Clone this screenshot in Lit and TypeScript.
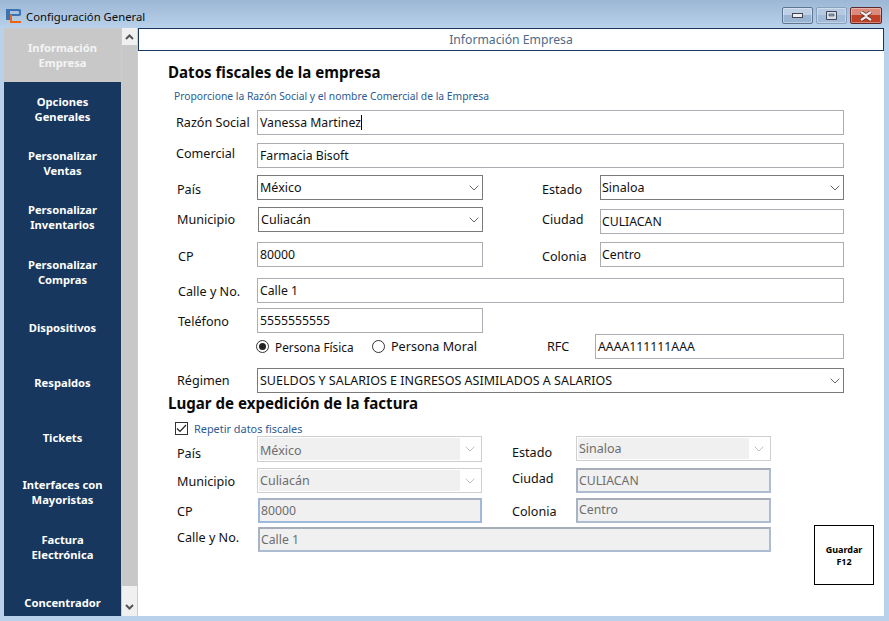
import { LitElement, html, css, svg } from "lit";
import { customElement } from "lit/decorators.js";

const chevron = svg`<svg class="chev" width="10" height="6" viewBox="0 0 10 6"><path d="M.7.7l4.3 4.3L9.300.7" fill="none" stroke="currentColor" stroke-width="1"/></svg>`;

const menu: [string, string, string][] = [
  ["Información", "Empresa", "item active"],
  ["Opciones", "Generales", "item"],
  ["Personalizar", "Ventas", "item"],
  ["Personalizar", "Inventarios", "item"],
  ["Personalizar", "Compras", "item h55"],
  ["Dispositivos", "", "item h56"],
  ["Respaldos", "", "item"],
  ["Tickets", "", "item h56"],
  ["Interfaces con", "Mayoristas", "item"],
  ["Factura", "Electrónica", "item h56"],
  ["Concentrador", "", "item"],
];

@customElement("app-root")
export class AppRoot extends LitElement {
  static styles = css`
    :host { display: block; width: 889px; height: 621px; overflow: hidden; font-family: "Noto Sans", "Open Sans", sans-serif; font-size: 12px; color: #111; }
    * { box-sizing: border-box; }
    .window { width: 889px; height: 621px; display: flex; flex-direction: column; background: #b9d1ea; }
    .title { height: 28px; flex: none; display: flex; align-items: flex-start; background: linear-gradient(#9cb7d5, #b9d1ea); padding: 7px 7px 0 5px; }
    .logo { margin-top: 1px; margin-right: 5px; flex: none; }
    .title-text { flex: 1; font-size: 11.3px; line-height: 18px; color: #0c0c0c; margin-top: 1px; }
    .caps { display: flex; gap: 3px; }
    .cap { width: 31px; height: 17px; border: 1px solid #5f7690; border-radius: 2px; display: flex; align-items: center; justify-content: center; background: linear-gradient(#bdd0e6 0 50%, #9ab5d3 50% 100%); box-shadow: inset 0 0 0 1px rgba(255,255,255,.35); }
    .cap.faded { border-color: #8aa1bc; background: linear-gradient(#b4cae2 0 50%, #a1bbd8 50% 100%); }
    .cap.close { width: 32px; border-color: #5c2a2e; background: linear-gradient(#dc8a7c 0 45%, #bf4128 45% 100%); }
    .body { flex: 1; display: flex; padding: 0 5px 5px 4px; min-height: 0; }
    .side { width: 117px; flex: none; background: #17375e; display: flex; flex-direction: column; overflow: hidden; }
    .item { height: 54px; flex: none; display: flex; flex-direction: column; align-items: center; justify-content: center; color: #fff; font-weight: 700; font-size: 11.2px; line-height: 15px; text-align: center; }
    .item.active { background: #c8c8c8; color: #f4f4f4; }
    .h55 { height: 55px; } .h56 { height: 56px; }
    .scroll { width: 15px; flex: none; margin: 0 1px; background: #c8c8c8; display: flex; flex-direction: column; justify-content: space-between; }
    .sb { background: #f0f0f0; display: flex; align-items: center; justify-content: center; color: #555; }
    .sb.up { height: 17px; } .sb.down { height: 30px; padding-top: 12px; }
    .main { flex: 1; background: #fff; display: flex; flex-direction: column; padding-right: 0; min-width: 0; }
    .bar { height: 23px; flex: none; border: 1px solid #17375e; display: flex; align-items: center; justify-content: center; color: #4d6a8a; font-size: 12.2px; }
    .content { padding: 11px 0 0 30px; display: flex; flex-direction: column; }
    h2 { margin: 0; font-size: 15.1px; line-height: 20px; font-weight: 700; color: #0a0a0a; height: 20px; }
    .sub { margin: 7px 0 7px 6px; font-size: 10.3px; line-height: 14px; height: 14px; color: #2c5a94; }
    .row { display: flex; align-items: flex-start; height: 25px; flex: none; }
    .mt5 { margin-top: 5px; } .mt1 { margin-top: 1px; } .mt7 { margin-top: 7px; } .mt8 { margin-top: 8px; } .mt9 { margin-top: 9px; } .mt10 { margin-top: 10px; } .mt11 { margin-top: 11px; } .mt4 { margin-top: 4px; } .mt2 { margin-top: 2px; }
    .lbl { line-height: 16px; font-size: 12.6px; white-space: nowrap; color: #111; flex: none; }
    .c89 { width: 89px; } .c90 { width: 90px; } .c117 { width: 117px; padding-left: 59px; } .c94 { width: 94px; padding-left: 30px; }
    .pl8 { padding-left: 8px; } .pl9 { padding-left: 9px; } .pl10 { padding-left: 10px; } .pl41 { padding-left: 41px; }
    .pt2 { padding-top: 2px; } .pt3 { padding-top: 3px; } .pt5 { padding-top: 5px; } .pt6 { padding-top: 6px; } .pt7 { padding-top: 7px; } .pt9 { padding-top: 9px; } .pt10 { padding-top: 10px; }
    .f { height: 25px; border: 1px solid #abadb3; background: #fff; padding: 0 2px; line-height: 23px; font-size: 12.25px; color: #111; flex: none; white-space: nowrap; overflow: hidden; position: relative; }
    .tight { padding-left: 1px; }
    .sel { border-color: #7a7a7a; display: flex; justify-content: space-between; align-items: center; padding-right: 2px; font-size: 12.5px; }
    .chev { flex: none; color: #666; margin-right: 1px; }
    .w226 { width: 226px; } .w225 { width: 225px; } .w224 { width: 224px; } .w244 { width: 244px; } .w587 { width: 587px; } .w249 { width: 249px; } .w195 { width: 195px; } .w513 { width: 513px; }
    .caret { display: inline-block; width: 1px; height: 15px; background: #000; vertical-align: -3px; }
    .sel.off { border-color: #cfcfcf; padding: 1px; color: #6d6d6d; }
    .sel.off .val { flex: 1; background: #f0f0f0; height: 21px; line-height: 21px; padding-left: 1px; }
    .sel.off .val.low { height: 22px; line-height: 26px; }
    .sel.off .arr { width: 20px; flex: none; display: flex; justify-content: center; color: #c0c0c0; }
    .sel.off .chev { margin: 0; color: #c0c0c0; }
    .inp-off { background: #f0f0f0; border: 2px solid #adbcd0; border-top-color: #a8aeb8; border-left-color: #a8b3c3; color: #6d6d6d; line-height: 21px; padding: 0 1px; }
    .inp-off.blue { border-color: #9dbadd; border-top-color: #a8b4c6; }
    .inp-off.up { line-height: 19px; }
    .radios { width: 338px; padding-left: 88px; display: flex; align-items: center; height: 25px; flex: none; }
    .radio { width: 13px; height: 13px; border: 1px solid #333; border-radius: 50%; display: flex; align-items: center; justify-content: center; flex: none; margin-right: 6px; }
    .radio i { width: 7px; height: 7px; border-radius: 50%; background: #222; }
    .rlabel { width: 97px; flex: none; line-height: 16px; font-size: 11.8px; }
    .rlabel.last { width: 90px; font-size: 12.6px; }
    .check { display: flex; align-items: center; margin: 8px 0 0 7px; height: 15px; font-size: 10.9px; color: #2c5a94; }
    .box { width: 13px; height: 13px; border: 1px solid #333; display: flex; align-items: center; justify-content: center; margin-right: 6px; }
    .lower { display: flex; }
    .lower-form { width: 646px; flex: none; }
    .save { width: 60px; height: 60px; flex: none; border: 1.5px solid #000; align-self: flex-end; margin-bottom: -33px; padding-top: 2px; display: flex; flex-direction: column; align-items: center; justify-content: center; font-size: 9px; font-weight: 700; line-height: 12.5px; background: #fff; color: #000; }
    .h26 { height: 26px; }
  `;

  render() {
    return html`<div class="window">
      <div class="title">
        <svg class="logo" width="16" height="16" viewBox="0 0 16 16">
          <path d="M1 1h12.500a2.500 2.500 0 0 1 0 7H5v4H1z M5 3v3h7.800a1.500 1.500 0 0 0 0-3z" fill="#3a72b4" fill-rule="evenodd"/>
          <path d="M5 6.500h2v6.500h9v2H5z" fill="#f0650f"/>
        </svg>
        <div class="title-text">Configuración General</div>
        <div class="caps">
          <div class="cap"><svg width="12" height="5" viewBox="0 0 12 5"><rect x=".5" y=".5" width="10" height="4" fill="#eee" stroke="#445"/></svg></div>
          <div class="cap faded"><svg width="11" height="9" viewBox="0 0 11 9"><path d="M.5.5h10v8H.5z" fill="#d6dfe9" stroke="#445"/><path d="M3 3h5v2H3z" fill="#8ea6c0" stroke="#445" stroke-width=".6"/></svg></div>
          <div class="cap close"><svg width="14" height="10" viewBox="0 0 14 10"><path d="M2 1l5 3.200L12 1M2 9l5-3.200L12 9" fill="none" stroke="#4d2320" stroke-width="3.600"/><path d="M2 1l5 3.200L12 1M2 9l5-3.200L12 9" fill="none" stroke="#f1eeee" stroke-width="2.400"/></svg></div>
        </div>
      </div>
      <div class="body">
        <nav class="side">
          ${menu.map(([a, b, c]) => html`<div class=${c}><span>${a}</span>${b ? html`<span>${b}</span>` : ""}</div>`)}
        </nav>
        <div class="scroll">
          <div class="sb up"><svg width="9" height="6" viewBox="0 0 9 6"><path d="M1 5l3.500-3.500L8 5" fill="none" stroke="currentColor" stroke-width="2"/></svg></div>
          <div class="sb down"><svg width="9" height="6" viewBox="0 0 9 6"><path d="M1 1l3.500 3.500L8 1" fill="none" stroke="currentColor" stroke-width="2"/></svg></div>
        </div>
        <main class="main">
          <div class="bar">Información Empresa</div>
          <div class="content">
            <h2>Datos fiscales de la empresa</h2>
            <div class="sub">Proporcione la Razón Social y el nombre Comercial de la Empresa</div>

            <div class="row">
              <div class="lbl c89 pl8 pt5">Razón Social</div>
              <div class="f w587">Vanessa Martinez<span class="caret"></span></div>
            </div>
            <div class="row mt8">
              <div class="lbl c89 pl8 pt3">Comercial</div>
              <div class="f w587">Farmacia Bisoft</div>
            </div>
            <div class="row mt7">
              <div class="lbl c89 pl9 pt7">País</div>
              <div class="f sel w226"><span>México</span>${chevron}</div>
              <div class="lbl c117 pt7">Estado</div>
              <div class="f sel tight w244"><span>Sinaloa</span>${chevron}</div>
            </div>
            <div class="row mt7">
              <div class="lbl c90 pl9 pt5">Municipio</div>
              <div class="f sel w225"><span>Culiacán</span>${chevron}</div>
              <div class="lbl c117 pt5">Ciudad</div>
              <div class="f tight w244 mt2">CULIACAN</div>
            </div>
            <div class="row mt10">
              <div class="lbl c89 pl10 pt7">CP</div>
              <div class="f w226">80000</div>
              <div class="lbl c117 pt7">Colonia</div>
              <div class="f tight w244">Centro</div>
            </div>
            <div class="row mt11">
              <div class="lbl c89 pl10 pt6">Calle y No.</div>
              <div class="f w587">Calle 1</div>
            </div>
            <div class="row mt5">
              <div class="lbl c89 pl10 pt6">Teléfono</div>
              <div class="f w226">5555555555</div>
            </div>
            <div class="row mt1">
              <div class="radios">
                <span class="radio"><i></i></span><span class="rlabel">Persona Física</span>
                <span class="radio"></span><span class="rlabel last">Persona Moral</span>
              </div>
              <div class="lbl c89 pl41 pt5">RFC</div>
              <div class="f w249">AAAA111111AAA</div>
            </div>
            <div class="row mt9">
              <div class="lbl c89 pl9 pt5">Régimen</div>
              <div class="f sel w587"><span>SUELDOS Y SALARIOS E INGRESOS ASIMILADOS A SALARIOS</span>${chevron}</div>
            </div>

            <div class="lower">
              <div class="lower-form">
                <h2>Lugar de expedición de la factura</h2>
                <div class="check">
                  <span class="box"><svg width="11" height="9" viewBox="0 0 11 9"><path d="M1 4.500l3 3L10 1" fill="none" stroke="#222" stroke-width="1.200"/></svg></span>
                  Repetir datos fiscales
                </div>
                <div class="row">
                  <div class="lbl c89 pl9 pt10">País</div>
                  <div class="f sel off w225 h26"><span class="val low">México</span><span class="arr">${chevron}</span></div>
                  <div class="lbl c94 pt9">Estado</div>
                  <div class="f sel off w195"><span class="val">Sinaloa</span><span class="arr">${chevron}</span></div>
                </div>
                <div class="row mt7">
                  <div class="lbl c89 pl9 pt6">Municipio</div>
                  <div class="f sel off w225"><span class="val">Culiacán</span><span class="arr">${chevron}</span></div>
                  <div class="lbl c94 pt3">Ciudad</div>
                  <div class="f inp-off w195">CULIACAN</div>
                </div>
                <div class="row mt5">
                  <div class="lbl c90 pl9 pt6">CP</div>
                  <div class="f inp-off blue w224">80000</div>
                  <div class="lbl c94 pt6">Colonia</div>
                  <div class="f inp-off up w195">Centro</div>
                </div>
                <div class="row mt4">
                  <div class="lbl c90 pl9 pt3">Calle y No.</div>
                  <div class="f inp-off w513">Calle 1</div>
                </div>
              </div>
              <div class="save"><span>Guardar</span><span>F12</span></div>
            </div>
          </div>
        </main>
      </div>
    </div>`;
  }
}
